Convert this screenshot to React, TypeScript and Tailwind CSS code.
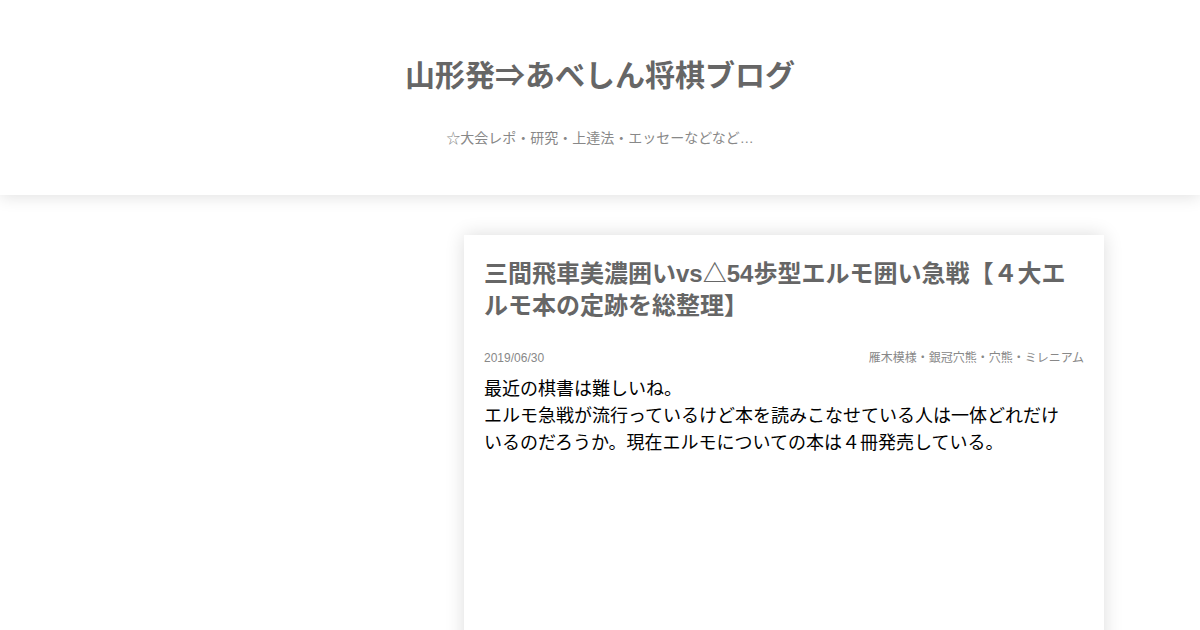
export default function App() {
  return (
    <div className="h-[630px] overflow-hidden bg-white font-['Liberation_Sans','Noto_Sans_CJK_JP',sans-serif]">
      {/* ヘッダー */}
      <header className="relative z-10 h-[195px] bg-white shadow-[0_2px_16px_rgba(0,0,0,0.12)] flex flex-col items-center">
        <h1 className="mt-[57px] text-[30px] leading-[38px] font-bold text-[#666]">山形発⇒あべしん将棋ブログ</h1>
        <p className="mt-[33px] text-[14px] leading-[20px] text-[#888]">☆大会レポ・研究・上達法・エッセーなどなど…</p>
      </header>

      <main className="mx-auto w-[1008px] flex pt-[40px]">
        <div className="w-[368px] shrink-0" />
        <article className="w-[640px] h-[420px] bg-white shadow-[0_0_18px_rgba(0,0,0,0.14)] px-5 pt-[23px]">
          <h2 className="text-[24px] leading-[32px] font-bold text-[#666]">
            三間飛車美濃囲いvs△54歩型エルモ囲い急戦【４大エルモ本の定跡を総整理】
          </h2>
          <div className="mt-[28px] flex justify-between items-end text-[12px] leading-[16px] text-[#888]">
            <span>2019/06/30</span>
            <span>雁木模様・銀冠穴熊・穴熊・ミレニアム</span>
          </div>
          <div className="mt-[10px] pr-[8px] text-[18px] leading-[27px] text-black">
            <p>最近の棋書は難しいね。</p>
            <p>エルモ急戦が流行っているけど本を読みこなせている人は一体どれだけいるのだろうか。現在エルモについての本は４冊発売している。</p>
          </div>
        </article>
      </main>
    </div>
  )
}
